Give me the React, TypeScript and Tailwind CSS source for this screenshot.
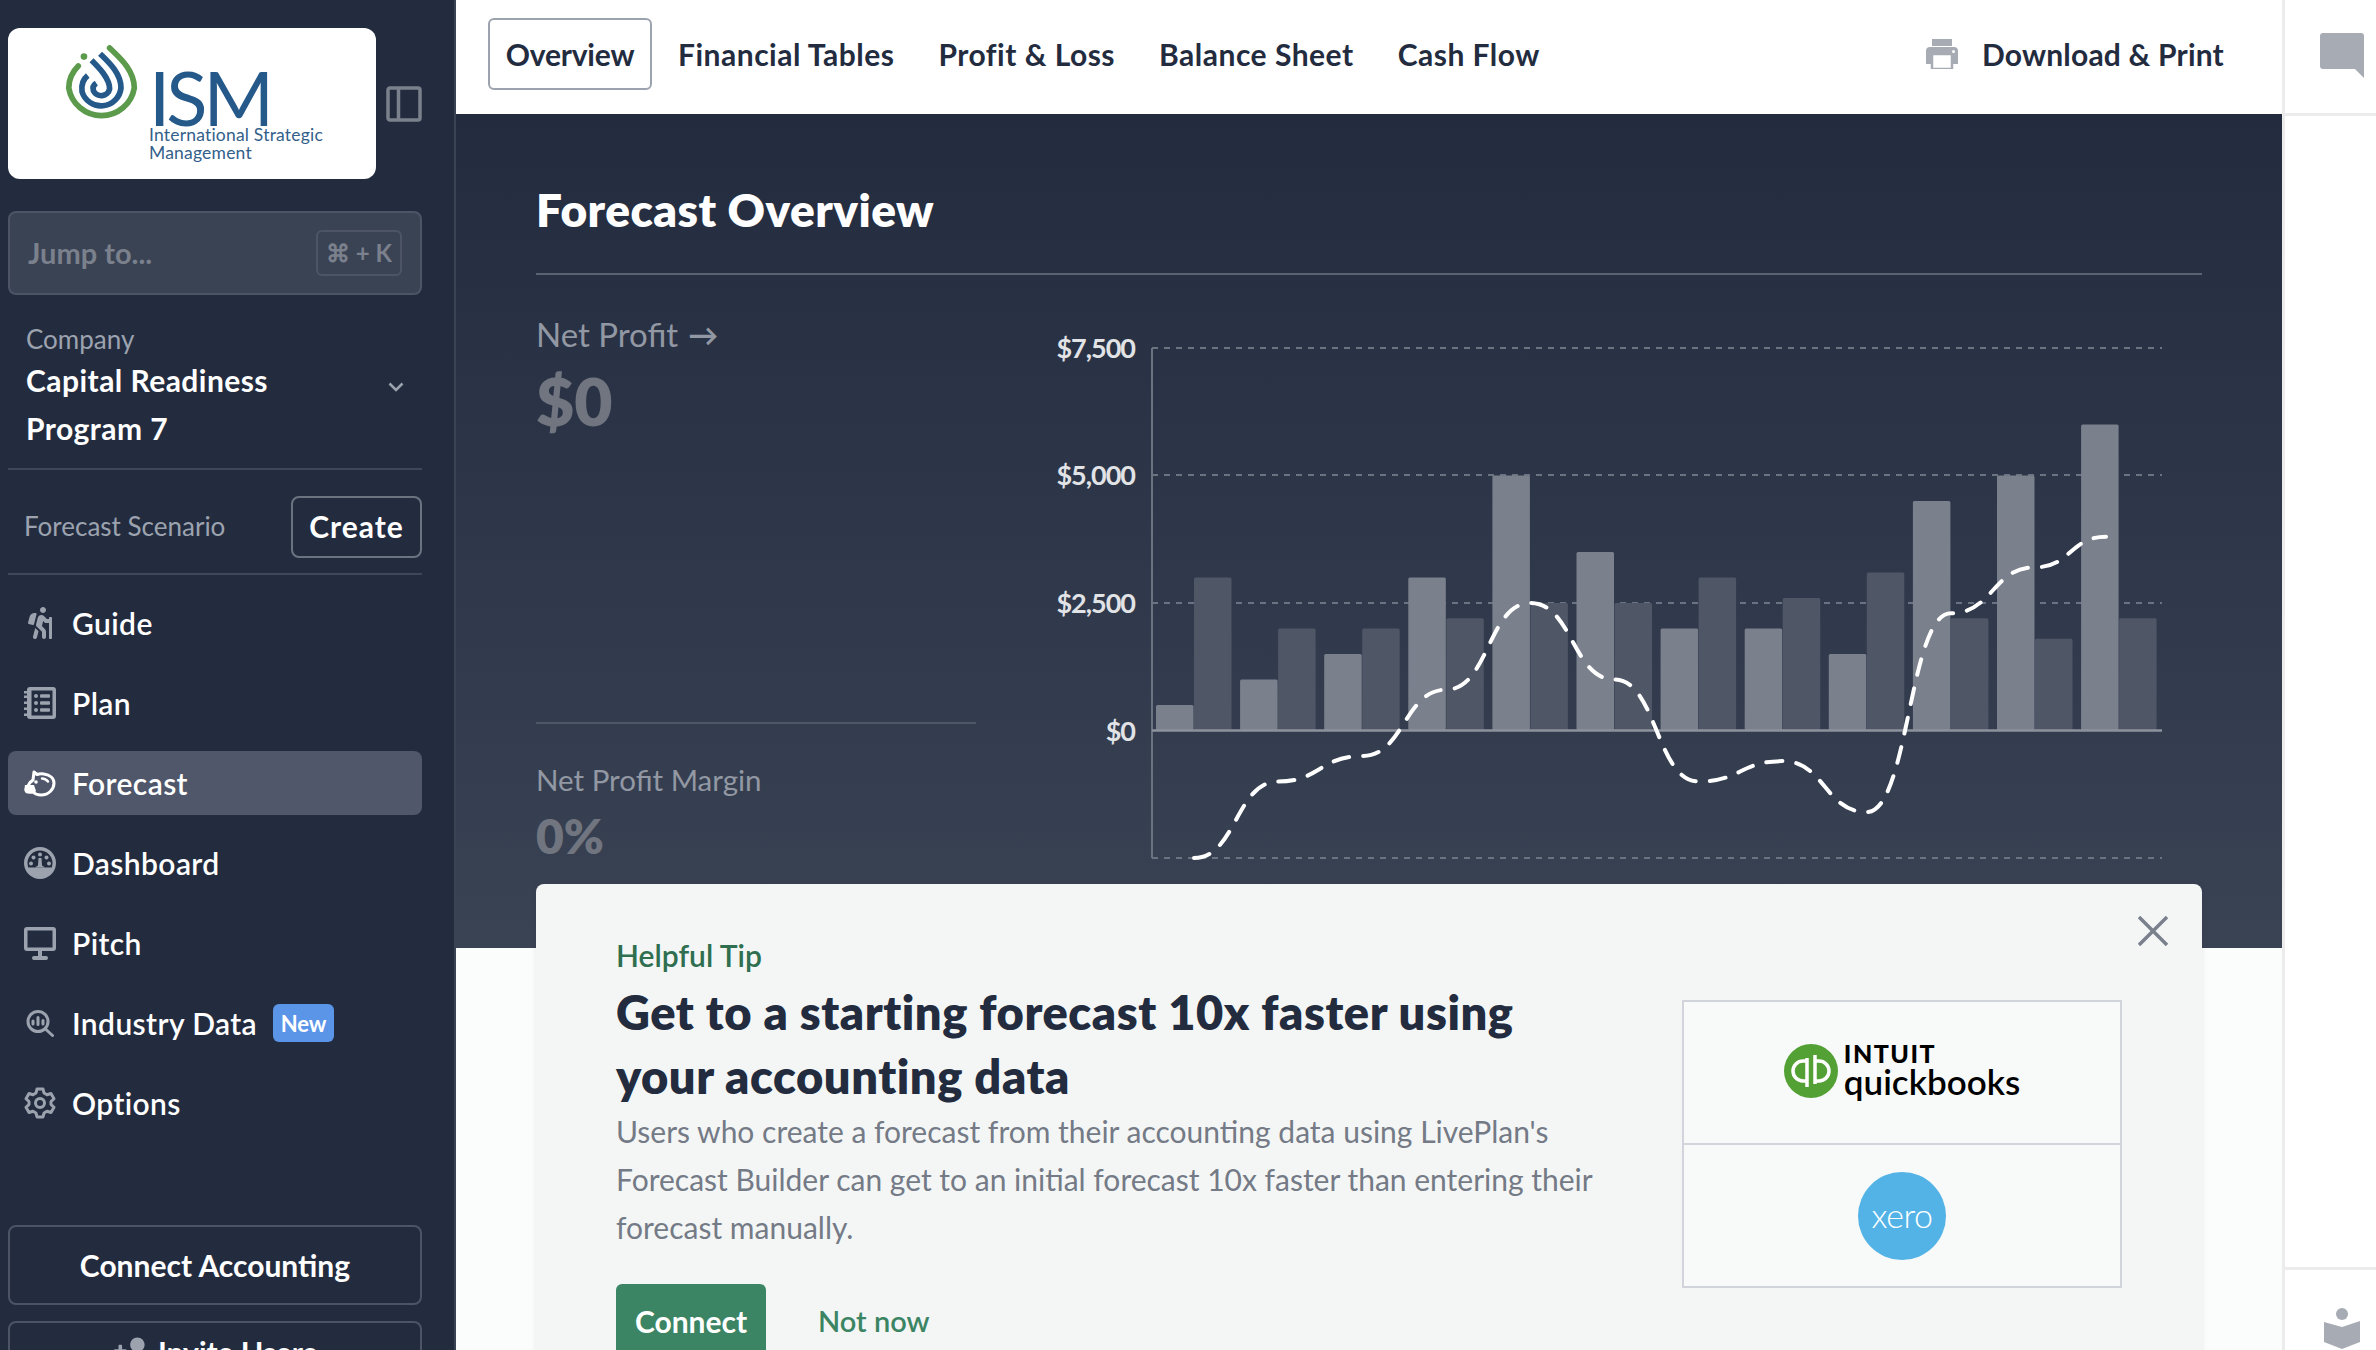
import { FaHiking, FaUserPlus } from "react-icons/fa";

const font = { fontFamily: "Lato, sans-serif" };

const lightBars = [500, 1000, 1500, 3000, 5000, 3500, 2000, 2000, 1500, 4500, 5000, 6000];
const darkBars = [3000, 2000, 2000, 2200, 2500, 2500, 3000, 2600, 3100, 2200, 1800, 2200];
const linePoints = [-2500, -1000, -500, 800, 2500, 1000, -1000, -600, -1600, 2300, 3200, 3800];

const CHART_LEFT = 1152;
const ZERO_Y = 730.5;
const PX_PER_DOLLAR = 0.051;
const GROUP_STEP = 84.1;

const toY = (value: number) => ZERO_Y - value * PX_PER_DOLLAR;

// flat at every point, s-curve in between
function bumpPath(points: [number, number][]) {
  let d = `M${points[0][0]} ${points[0][1]}`;
  for (let i = 1; i < points.length; i++) {
    const [x0, y0] = points[i - 1];
    const [x1, y1] = points[i];
    const mid = (x0 + x1) / 2;
    d += ` C${mid} ${y0} ${mid} ${y1} ${x1} ${y1}`;
  }
  return d;
}

function PlanIcon() {
  return (
    <svg viewBox="0 0 32 32" className="h-[32px] w-[32px]" fill="#9ca3af">
      <path
        fillRule="evenodd"
        d="M6 0h23a3 3 0 0 1 3 3v26a3 3 0 0 1-3 3H6a3 3 0 0 1-3-3h-3v-2.500h3v-3.500h-3v-2.500h3v-3.500h-3v-2.500h3v-3.500h-3v-2.500h3V6.500H0V4h3V3a3 3 0 0 1 3-3zm1.500 3.500v25h21v-25z"
      />
      <circle cx="12" cy="9" r="2" />
      <circle cx="12" cy="16" r="2" />
      <circle cx="12" cy="23" r="2" />
      <rect x="16" y="7.300" width="10" height="3.400" rx="1" />
      <rect x="16" y="14.300" width="10" height="3.400" rx="1" />
      <rect x="16" y="21.300" width="10" height="3.400" rx="1" />
    </svg>
  );
}

function PiggyIcon() {
  return (
    <svg viewBox="0 0 32 27" className="h-[27px] w-[32px]" fill="none">
      <path
        d="M10 2l3 2.500c2-.8 5-1 7-.5 6 1 10 4.500 10 9 0 6-5 12-13 12-3 0-6-1-8-3H4c-1.500 0-2.500-1.500-2-3L6 12.500 9 10z"
        stroke="#fff"
        strokeWidth="3"
        strokeLinejoin="round"
      />
      <path d="M1 15h9l2 6c-2 3-6 3-8 2-3 0-4-3-3-8z" fill="#fff" />
      <circle cx="12" cy="12" r="1.800" fill="#fff" />
      <path d="M18 8.500c2.500 0 4.500 1 6 3" stroke="#fff" strokeWidth="2.500" strokeLinecap="round" />
    </svg>
  );
}

function GaugeIcon() {
  return (
    <svg viewBox="0 0 32 32" className="h-[32px] w-[32px]" fill="#9ca3af">
      <path
        fillRule="evenodd"
        d="M16 0a16 16 0 1 1 0 32 16 16 0 0 1 0-32zm0 3.500A12.500 12.500 0 0 0 3.500 16c0 1.600.3 3 .8 4.500h23.400c.5-1.500.8-2.900.8-4.500A12.500 12.500 0 0 0 16 3.500z"
      />
      <circle cx="16" cy="7.500" r="2" />
      <circle cx="9.500" cy="10.500" r="2" />
      <circle cx="22.500" cy="10.500" r="2" />
      <circle cx="7" cy="16.500" r="2" />
      <circle cx="25" cy="16.500" r="2" />
      <path d="M14.500 11h3l.5 7.500 3 2h-10l3-2z" />
    </svg>
  );
}

function MonitorIcon() {
  return (
    <svg viewBox="0 0 32 33" className="h-[33px] w-[32px]" fill="#9ca3af">
      <path
        fillRule="evenodd"
        d="M3 0h26a3 3 0 0 1 3 3v18a3 3 0 0 1-3 3H3a3 3 0 0 1-3-3V3a3 3 0 0 1 3-3zm.5 3.500v17h25v-17z"
      />
      <rect x="14" y="24" width="4" height="6" />
      <rect x="8" y="29" width="16" height="4" rx="2" />
    </svg>
  );
}

function IndustryIcon() {
  return (
    <svg viewBox="0 0 28 27" className="h-[27px] w-[28px]" fill="none" stroke="#9ca3af" strokeWidth="3">
      <circle cx="12" cy="11.500" r="10" />
      <path d="M19.500 19l7 6.500" strokeLinecap="round" />
      <path d="M7 11v3M12 7.500v7M17 10.500v3.500" strokeLinecap="round" />
    </svg>
  );
}

function GearIcon() {
  return (
    <svg viewBox="0 0 32 32" className="h-[32px] w-[32px]" fill="none" stroke="#9ca3af" strokeWidth="3" strokeLinejoin="round">
      <path d="M13 2h6l1 4 3 1.700 4-1.200 3 5.200-3 2.800v3l3 2.800-3 5.200-4-1.200L20 26l-1 4h-6l-1-4-3-1.700-4 1.200-3-5.200 3-2.800v-3L2 11.700l3-5.200 4 1.200L12 6z" />
      <circle cx="16" cy="16" r="4.500" />
    </svg>
  );
}

function PrinterIcon() {
  return (
    <svg viewBox="0 0 32 30" className="ml-auto h-[30px] w-[32px]" fill="#a7abb3">
      <rect x="6" y="0" width="20" height="7" />
      <path d="M4 8h24a4 4 0 0 1 4 4v13h-32V12a4 4 0 0 1 4-4z" />
      <rect x="6" y="15" width="20" height="15" fill="#fff" stroke="#a7abb3" strokeWidth="2.500" />
      <circle cx="27.500" cy="12.500" r="1.500" fill="#fff" />
    </svg>
  );
}

function BookReaderIcon() {
  return (
    <svg viewBox="0 0 36 41" className="h-[41px] w-[36px]" fill="#a7abb3">
      <circle cx="18" cy="6" r="6" />
      <path d="M0 14l18 5 18-6v21l-18 7-18-7z" />
    </svg>
  );
}

function NavItem({ icon, label, active, badge }: { icon: React.ReactNode; label: string; active?: boolean; badge?: boolean }) {
  return (
    <div className={`flex h-[64px] items-center rounded-lg ${active ? "bg-[#50576a]" : ""}`}>
      <div className="flex w-[64px] items-center justify-center">{icon}</div>
      <span className="text-[30px] font-semibold tracking-[0.4px] text-white">{label}</span>
      {badge && (
        <span className="ml-[16px] flex h-[38px] w-[61px] items-center justify-center rounded-md bg-[#5b95e8] text-[22px] font-bold text-white">New</span>
      )}
    </div>
  );
}

function Sidebar() {
  return (
    <aside className="flex h-[1350px] w-[456px] shrink-0 flex-col overflow-hidden border-r-[2px] border-[#3a4354] bg-[#232c3f] pl-[8px] pr-[32px] pt-[28px] *:shrink-0">
      <div className="flex items-center justify-between">
        <div className="flex h-[151px] w-[368px] items-start rounded-xl bg-white pl-[56px] pt-[17px]">
          <svg viewBox="0 0 80 86" className="h-[82px] w-[76px]" fill="none">
            <path d="M48 3c8 8 26 22 26 42A35 35 0 0 1 5 45c0-9 4-17 10-23" stroke="#5c9a4c" strokeWidth="6" strokeLinecap="round" />
            <circle cx="21" cy="12" r="3.500" fill="#5c9a4c" />
            <path d="M38 9c8 8 22 20 22 36a21 21 0 0 1-41 4c-1-7 1-13 6-17" stroke="#24598a" strokeWidth="6" />
            <path d="M29 16c8 8 19 19 19 30a9 9 0 0 1-17 2c-1-3 0-6 3-8" stroke="#24598a" strokeWidth="6" />
          </svg>
          <div className="ml-[9px] flex flex-col pt-[25px]">
            <span className="h-[54px] text-[76px] font-normal leading-[54px] tracking-[-4px] text-[#24598a]">ISM</span>
            <span className="mt-[2px] w-[180px] text-[17.500px] leading-[18px] tracking-[0.2px] text-[#33608a]">International Strategic Management</span>
          </div>
        </div>
        <svg viewBox="0 0 36 36" className="h-[36px] w-[36px]" fill="none" stroke="#7b808d" strokeWidth="3.500">
          <rect x="2" y="2" width="32" height="32" rx="2" />
          <path d="M12.500 2v32" />
        </svg>
      </div>

      <div className="mt-[32px] flex h-[84px] items-center justify-between rounded-lg border-[2px] border-[#4c5465] bg-[#3a4354] pl-[18px] pr-[18px]">
        <span className="text-[29px] font-bold text-[#7b808d]">Jump to...</span>
        <span className="flex h-[46px] w-[86px] items-center justify-center rounded-md border-[2px] border-[#4c5465] text-[24px] font-bold text-[#7b808d]">⌘ + K</span>
      </div>

      <div className="relative mt-[30px] border-b-[2px] border-[#3f4759] pb-[16px] pl-[18px]">
        <div className="h-[28px] text-[26px] leading-[28px] text-[#9ca3af]">Company</div>
        <div className="mt-[3px] w-[300px] text-[30px] font-bold leading-[48px] tracking-[0.45px] text-white">Capital Readiness Program 7</div>
        <svg viewBox="0 0 16 10" className="absolute right-[18px] top-[57px] h-[10px] w-[16px]" fill="none" stroke="#9ca3af" strokeWidth="2.500">
          <path d="M1.500 1.500L8 8l6.500-6.500" />
        </svg>
      </div>

      <div className="flex h-[105px] items-center justify-between border-b-[2px] border-[#3f4759] pl-[16px] pt-[10px]">
        <span className="text-[26px] text-[#9ca3af]">Forecast Scenario</span>
        <span className="flex h-[62px] w-[131px] items-center justify-center rounded-lg border-[2px] border-[#6b7280] text-[30px] font-bold tracking-[1px] text-white">Create</span>
      </div>

      <nav className="mt-[16px] flex flex-col gap-[16px]">
        <NavItem icon={<FaHiking className="h-[32px] w-[32px] text-[#9ca3af]" />} label="Guide" />
        <NavItem icon={<PlanIcon />} label="Plan" />
        <NavItem icon={<PiggyIcon />} label="Forecast" active />
        <NavItem icon={<GaugeIcon />} label="Dashboard" />
        <NavItem icon={<MonitorIcon />} label="Pitch" />
        <NavItem icon={<IndustryIcon />} label="Industry Data" badge />
        <NavItem icon={<GearIcon />} label="Options" />
      </nav>

      <div className="mt-[90px] flex h-[80px] items-center justify-center rounded-lg border-[2px] border-[#4c5465] text-[30px] font-bold text-white">
        Connect Accounting
      </div>
      <div className="mt-[16px] flex h-[62px] items-center justify-center gap-[8px] rounded-lg border-[2px] border-[#4c5465] text-[30px] font-bold text-white">
        <FaUserPlus className="h-[30px] w-[36px] -scale-x-100 text-[#9ca3af]" />
        Invite Users
      </div>
    </aside>
  );
}

function Header() {
  const tabs = ["Financial Tables", "Profit & Loss", "Balance Sheet", "Cash Flow"];
  return (
    <header className="flex h-[114px] shrink-0 items-center bg-white pb-[6px] pl-[32px] pr-[58px]">
      <span className="flex h-[72px] w-[164px] items-center justify-center rounded-md border-[2px] border-[#9ca3af] text-[30px] font-bold tracking-[-0.2px] text-[#232c3f]">
        Overview
      </span>
      {tabs.map((tab) => (
        <span key={tab} className="ml-[26px] mr-[18px] text-[30px] font-bold tracking-[0.5px] text-[#232c3f]">
          {tab}
        </span>
      ))}
      <PrinterIcon />
      <span className="ml-[24px] text-[30px] font-bold tracking-[0.2px] text-[#232c3f]">Download &amp; Print</span>
    </header>
  );
}

function Chart() {
  const gridLines = [348, 475, 603, 858];
  const labels: [string, number][] = [
    ["$7,500", 348],
    ["$5,000", 475],
    ["$2,500", 603],
    ["$0", 730.5],
  ];
  const points = linePoints.map((v, i) => [1194 + GROUP_STEP * i, toY(v)] as [number, number]);
  points[11][0] = 2106;
  return (
    <svg viewBox="1040 320 1140 560" className="absolute left-[584px] top-[206px] h-[560px] w-[1140px]">
      {gridLines.map((y) => (
        <line key={y} x1={CHART_LEFT} x2={2162} y1={y} y2={y} stroke="#6b7280" strokeWidth="2" strokeDasharray="6 6" />
      ))}
      {labels.map(([text, y]) => (
        <text key={text} x={1135} y={y + 10} textAnchor="end" fontSize="27" fontWeight="700" fill="#e1e3e6" letterSpacing="-1" style={font}>
          {text}
        </text>
      ))}
      {lightBars.map((v, i) => (
        <rect key={i} x={1156 + GROUP_STEP * i} y={toY(v)} width={37.5} height={v * PX_PER_DOLLAR} rx="1.500" fill="#7b808d" />
      ))}
      {darkBars.map((v, i) => (
        <rect key={i} x={1194 + GROUP_STEP * i} y={toY(v)} width={37.5} height={v * PX_PER_DOLLAR} rx="1.500" fill="#4f5666" />
      ))}
      <line x1={CHART_LEFT} x2={CHART_LEFT} y1={348} y2={858} stroke="#6b7280" strokeWidth="2" />
      <line x1={CHART_LEFT} x2={2162} y1={ZERO_Y} y2={ZERO_Y} stroke="#8d929c" strokeWidth="2.500" />
      <path d={bumpPath(points)} fill="none" stroke="#fff" strokeWidth="4" strokeDasharray="16 14" strokeLinecap="round" />
    </svg>
  );
}

function Hero() {
  return (
    <section className="relative h-[834px] shrink-0 bg-gradient-to-b from-[#232c3f] to-[#3a4354] px-[80px]">
      <h1 className="flex h-[161px] items-center border-b-[2px] border-[#5a6170] pt-[32px] text-[46px] font-extrabold leading-none tracking-[0.45px] text-white">
        Forecast Overview
      </h1>
      <div className="w-[440px]">
        <div className="mt-[39px] flex h-[40px] items-center gap-[10px] text-[33px] leading-none text-[#9298a3]">
          Net Profit
          <span className="text-[30px] font-bold">→</span>
        </div>
        <div className="mt-[7px] h-[80px] text-[66px] font-extrabold leading-[80px] text-[#70757f]">$0</div>
        <div className="mt-[281px] border-b-[2px] border-[#4f5666]" />
        <div className="mt-[38px] h-[36px] text-[29.500px] leading-[36px] text-[#9298a3]">Net Profit Margin</div>
        <div className="mt-[13px] h-[50px] text-[48px] font-extrabold leading-[50px] text-[#70757f]">0%</div>
      </div>
      <Chart />
    </section>
  );
}

function QuickbooksLogo() {
  return (
    <div className="flex items-center gap-[6px] pb-[3px]">
      <svg viewBox="0 0 54 54" className="h-[54px] w-[54px]" fill="none">
        <circle cx="27" cy="27" r="27" fill="#53a035" />
        <path d="M23 14v29M23 17h-4a10 10 0 0 0 0 20h4M31 40V11M31 37h4a10 10 0 0 0 0-20h-4" stroke="#fff" strokeWidth="3.500" />
      </svg>
      <div className="flex flex-col">
        <span className="h-[24px] text-[25px] font-black leading-[24px] tracking-[1.500px] text-black">INTUIT</span>
        <span className="h-[36px] text-[35px] font-semibold leading-[32px] text-black">quickbooks</span>
      </div>
    </div>
  );
}

function TipCard() {
  return (
    <div className="relative mx-[80px] -mt-[64px] h-[520px] rounded-lg bg-[#f3f6f5] pl-[80px] pr-[80px] pt-[55px] shadow-[0_0_6px_rgba(0,0,0,0.08)]">
      <svg viewBox="0 0 30 30" className="absolute right-[34px] top-[32px] h-[30px] w-[30px]" fill="none" stroke="#7b808d" strokeWidth="3.500">
        <path d="M1 1l28 28M29 1L1 29" />
      </svg>
      <div className="flex justify-between">
        <div className="w-[1000px]">
          <div className="h-[32px] text-[30px] font-semibold leading-[32px] text-[#2f6f50]">Helpful Tip</div>
          <h2 className="mt-[9px] w-[960px] text-[47px] font-extrabold leading-[64px] tracking-[0.55px] text-[#232c3f]">
            Get to a starting forecast 10x faster using your accounting data
          </h2>
          <p className="mt-[-1px] text-[30px] leading-[48px] text-[#747a86]">
            Users who create a forecast from their accounting data using LivePlan's Forecast Builder can get to an initial forecast 10x faster than entering their forecast manually.
          </p>
          <div className="mt-[33px] flex items-center gap-[52px]">
            <span className="flex h-[74px] w-[150px] items-center justify-center rounded-md bg-[#3c8564] text-[30px] font-bold text-white">Connect</span>
            <span className="text-[29px] font-semibold text-[#3c8564]">Not now</span>
          </div>
        </div>
        <div className="mt-[61px] flex h-[288px] w-[440px] flex-col border-[2px] border-[#d1d5db] bg-[#f8faf9]">
          <div className="flex h-[143px] items-center justify-center border-b-[2px] border-[#d1d5db]">
            <QuickbooksLogo />
          </div>
          <div className="flex flex-1 items-center justify-center">
            <div className="flex h-[88px] w-[88px] items-center justify-center rounded-full bg-[#54b3e6] pb-[2px] text-[34px] font-light tracking-[-0.5px] text-white">xero</div>
          </div>
        </div>
      </div>
    </div>
  );
}

function RightRail() {
  return (
    <aside className="flex h-[1350px] w-[94px] shrink-0 flex-col border-l-[3px] border-[#ececec] bg-white">
      <div className="flex h-[116px] items-start border-b-[3px] border-[#ececec] pl-[35px] pt-[33px]">
        <svg viewBox="0 0 44 45" className="h-[45px] w-[44px]" fill="#a7abb3">
          <path d="M3 0h38a3 3 0 0 1 3 3v42l-9-9H3a3 3 0 0 1-3-3V3a3 3 0 0 1 3-3z" />
        </svg>
      </div>
      <div className="mt-auto flex h-[83px] items-start border-t-[3px] border-[#ececec] pl-[39px] pt-[38px]">
        <BookReaderIcon />
      </div>
    </aside>
  );
}

export default function App() {
  return (
    <div className="flex h-[1350px] w-[2376px] overflow-hidden bg-white" style={font}>
      <Sidebar />
      <main className="flex min-w-0 flex-1 flex-col bg-[#fbfcfc]">
        <Header />
        <Hero />
        <TipCard />
      </main>
      <RightRail />
    </div>
  );
}
